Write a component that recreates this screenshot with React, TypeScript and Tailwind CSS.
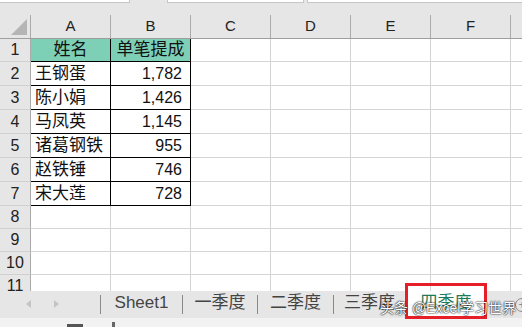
import React from "react";

const font = "font-['Liberation_Sans','Noto_Sans_CJK_SC',sans-serif]";

interface Row {
  n: number;
  h: string;
  name?: string;
  amount?: string;
  head?: boolean;
}

const rows: Row[] = [
  { n: 1, h: "h-[23px]", name: "姓名", amount: "单笔提成", head: true },
  { n: 2, h: "h-[24px]", name: "王钢蛋", amount: "1,782" },
  { n: 3, h: "h-[24px]", name: "陈小娟", amount: "1,426" },
  { n: 4, h: "h-[24px]", name: "马凤英", amount: "1,145" },
  { n: 5, h: "h-[24px]", name: "诸葛钢铁", amount: "955" },
  { n: 6, h: "h-[24px]", name: "赵铁锤", amount: "746" },
  { n: 7, h: "h-[24px]", name: "宋大莲", amount: "728" },
  { n: 8, h: "h-[23px]" },
  { n: 9, h: "h-[23px]" },
  { n: 10, h: "h-[23px]" },
  { n: 11, h: "h-[23px]" },
];

const letters = ["A", "B", "C", "D", "E", "F"];

const tabs = ["Sheet1", "一季度", "二季度", "三季度"];
const tabWidths = ["w-[81px]", "w-[74px]", "w-[75px]", "w-[71px]"];

const App = () => {
  return (
    <div className={`relative w-[522px] h-[327px] overflow-hidden bg-white ${font}`}>
      {/* formula bar remnants */}
      <div className="h-[15px] bg-[#e6e6e6] relative">
        <div className="absolute left-0 top-0 w-[130px] h-[3px] bg-white border-b border-r border-[#c6c6c6]" />
        <div className="absolute left-[167px] top-0 w-[137px] h-[3px] bg-white border border-t-0 border-[#c6c6c6]" />
        <div className="absolute left-[307px] top-0 w-[220px] h-[3px] bg-white border border-t-0 border-[#c6c6c6]" />
      </div>

      {/* column headers */}
      <div className="flex h-[24px] bg-[#e6e6e6] border-b border-[#9e9e9e]">
        <div className="w-[31px] shrink-0 border-r border-[#ababab] relative">
          <div className="absolute left-[11px] top-[4px] w-0 h-0 border-l-[16px] border-l-transparent border-b-[16px] border-b-[#b5b5b5]" />
        </div>
        {letters.map((l) => (
          <div
            key={l}
            className="w-[80px] shrink-0 border-r border-[#ababab] flex items-center justify-center text-[15px] text-[#222]"
          >
            {l}
          </div>
        ))}
        <div className="flex-1" />
      </div>

      {/* rows */}
      <div className="h-[252px] overflow-hidden">
        {rows.map((r) => {
          const data = r.name !== undefined;
          return (
            <div key={r.n} className={`flex ${r.h}`}>
              <div className="w-[31px] shrink-0 bg-[#e6e6e6] border-r border-b border-r-[#ababab] border-b-[#d0d0d0] flex items-center justify-center text-[16px] text-[#222]">
                {r.n}
              </div>
              {data ? (
                <>
                  <div
                    className={`w-[80px] shrink-0 border-r border-b border-black flex items-center text-[17px] text-[#111] ${
                      r.head ? "bg-[#7dcfb6] justify-center" : "pl-[4px]"
                    }`}
                  >
                    {r.name}
                  </div>
                  <div
                    className={`w-[80px] shrink-0 border-r border-b border-black flex items-center text-[#111] ${
                      r.head
                        ? "bg-[#7dcfb6] justify-center text-[17px]"
                        : "justify-end pr-[8px] text-[16px]"
                    }`}
                  >
                    {r.amount}
                  </div>
                </>
              ) : (
                <>
                  <div className="w-[80px] shrink-0 border-r border-b border-[#d4d4d4]" />
                  <div className="w-[80px] shrink-0 border-r border-b border-[#d4d4d4]" />
                </>
              )}
              {["C", "D", "E", "F"].map((c) => (
                <div key={c} className="w-[80px] shrink-0 border-r border-b border-[#d4d4d4]" />
              ))}
              <div className="flex-1 border-b border-[#d4d4d4]" />
            </div>
          );
        })}
      </div>

      {/* sheet tabs */}
      <div className="flex h-[27px] bg-[#e6e6e6] text-[17px] text-[#444]">
        <div className="w-[100px] shrink-0 flex items-center pb-[1px]">
          <div className="ml-[26px] w-0 h-0 border-y-[4px] border-y-transparent border-r-[5px] border-r-[#c4c4c4]" />
          <div className="ml-[23px] w-0 h-0 border-y-[4px] border-y-transparent border-l-[5px] border-l-[#c4c4c4]" />
        </div>
        {tabs.map((t, i) => (
          <React.Fragment key={t}>
            <div className="w-px shrink-0 my-[4px] bg-[#8a8a8a]" />
            <div className={`${tabWidths[i]} shrink-0 flex justify-center pt-[1px] leading-[22px]`}>
              {t}
            </div>
          </React.Fragment>
        ))}
        <div className="w-[82px] shrink-0 bg-white flex justify-center pt-[1px] leading-[22px] text-[#1e7b5a]">
          四季度
        </div>
        <div className="flex-1 relative">
          <div className="absolute left-[28px] top-[7px] w-[14px] h-[14px] rounded-full border border-[#8a8a8a] flex items-center justify-center text-[12px] leading-none text-[#8a8a8a]">
            +
          </div>
        </div>
      </div>

      {/* status strip */}
      <div className="relative h-[9px] bg-[#f2f2f2]">
        <div className="absolute left-[67px] top-[6px] w-[16px] h-[3px] bg-[#555]" />
        <div className="absolute left-[112px] top-[4px] w-[3px] h-[5px] bg-[#666]" />
      </div>

      {/* annotation box around the active tab */}
      <div className="absolute left-[405px] top-[283px] w-[82px] h-[36px] border-[3px] border-[#e61e28]" />

      {/* watermark */}
      <div className="absolute left-[380px] top-[300px] text-[14px] leading-[17px] text-white [text-shadow:0_0_2px_#000,0_0_1px_#000] whitespace-nowrap">
        头条 @Excel学习世界
      </div>
    </div>
  );
};

export default App;
